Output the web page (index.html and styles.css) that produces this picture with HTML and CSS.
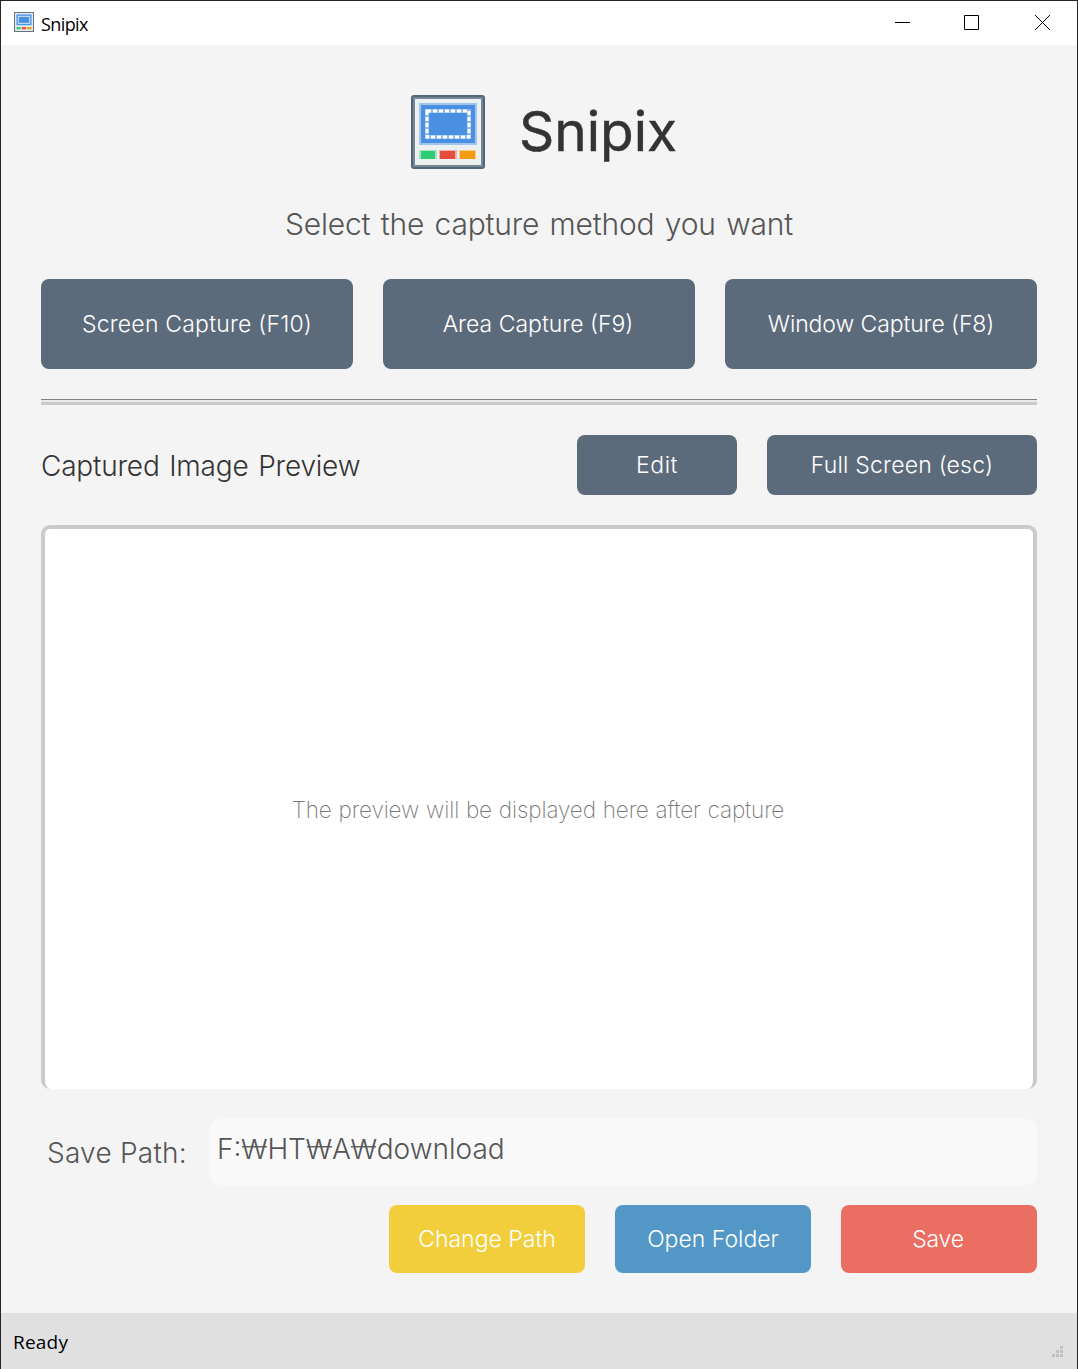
FILE: index.html
```html
<!DOCTYPE html>
<html lang="en">
<head>
<meta charset="utf-8">
<title>Snipix</title>
<link rel="stylesheet" href="styles.css">
</head>
<body>
<svg class="defs" width="0" height="0" aria-hidden="true">
  <symbol id="logo" viewBox="0 0 74 74">
    <rect x="0" y="0" width="74" height="74" rx="3" fill="#52667a"/>
    <rect x="2" y="2" width="70" height="70" fill="#788893"/>
    <rect x="4" y="4" width="66" height="66" fill="#ecf0f1"/>
    <rect x="8" y="8" width="58" height="42" fill="#a3c5eb"/>
    <rect x="10" y="10" width="54" height="38" fill="#4a90e2"/>
    <rect x="16" y="16" width="42" height="26" fill="none" stroke="#8dbaed" stroke-width="4"/>
    <rect x="16" y="16" width="42" height="26" fill="none" stroke="#fff" stroke-width="3" stroke-dasharray="4 2"/>
    <rect x="8" y="55" width="18" height="9" fill="#a9e3c2"/>
    <rect x="10" y="56" width="14" height="8" fill="#2ecc71"/>
    <rect x="28" y="55" width="18" height="9" fill="#eeb2ae"/>
    <rect x="29" y="56" width="15" height="8" fill="#e74c3c"/>
    <rect x="48" y="55" width="17" height="9" fill="#f2cf91"/>
    <rect x="49" y="56" width="15" height="8" fill="#f39c12"/>
  </symbol>
</svg>
<div class="window">
  <header class="titlebar">
    <svg class="app-icon" width="20" height="20"><use href="#logo"/></svg>
    <span class="window-title">Snipix</span>
    <svg class="controls" width="156" height="16" viewBox="0 0 156 16" fill="none" stroke="#000" stroke-width="1">
      <path d="M0 7.500H15M69.500.500H83.500V14.500H69.500Z"/>
      <path d="M140 0L155 15M155 0L140 15"/>
    </svg>
  </header>
  <main class="content">
    <div class="brand">
      <svg width="74" height="74"><use href="#logo"/></svg>
      <h1 class="brand-name">Snipix</h1>
    </div>
    <p class="subtitle"><span>Select the capture method you want</span></p>
    <div class="capture-row">
      <button class="btn"><span class="t-screen">Screen Capture (F10)</span></button>
      <button class="btn"><span class="t-area">Area Capture (F9)</span></button>
      <button class="btn"><span class="t-window">Window Capture (F8)</span></button>
    </div>
    <div class="divider"></div>
    <div class="preview-head">
      <h2 class="section-title">Captured Image Preview</h2>
      <button class="btn edit"><span class="t-edit">Edit</span></button>
      <button class="btn full"><span class="t-full">Full Screen (esc)</span></button>
    </div>
    <div class="preview"><span class="placeholder">The preview will be displayed here after capture</span></div>
    <div class="path-row">
      <label class="path-label">Save Path:</label>
      <div class="path-field"><span>F:<i class="won">W</i>HT<i class="won">W</i>A<i class="won">W</i>download</span></div>
    </div>
    <div class="actions">
      <button class="btn change"><span class="t-change">Change Path</span></button>
      <button class="btn open"><span class="t-open">Open Folder</span></button>
      <button class="btn save"><span class="t-save">Save</span></button>
    </div>
  </main>
  <footer class="status">
    <span class="status-text">Ready</span>
    <svg width="11" height="11" fill="#bfbfbf"><path d="M8 0h3v3h-3zM4 4h3v3h-3zM8 4h3v3h-3zM0 8h3v3h-3zM4 8h3v3h-3zM8 8h3v3h-3z"/></svg>
  </footer>
</div>
</body>
</html>
```
FILE: styles.css
```css
* { box-sizing: border-box; }
body { margin: 0; font-family: Inter, "Liberation Sans", sans-serif; font-weight: 300; }
.defs { display: block; height: 0; }
h1, h2, p { margin: 0; font-weight: 300; }
span, h1, h2, label { white-space: nowrap; }
.window {
  width: 1078px; height: 1369px; display: flex; flex-direction: column;
  border: 1px solid #252526; border-bottom: 0; background: #f4f4f4; overflow: hidden;
}
.titlebar { height: 44px; flex: none; display: flex; align-items: flex-start; background: #fff; padding: 11px 26px 0 13px; }
.window-title { margin: 0 auto 0 7px; font: 400 18px/24px "Open Sans", sans-serif; letter-spacing: -0.6px; color: #000; }
.controls { margin-top: 3px; }
.content { flex: 1; display: flex; flex-direction: column; padding: 50px 40px 0; }
.brand { display: flex; height: 74px; gap: 34px; padding-left: 370px; }
.brand-name { font-size: 55px; line-height: 73px; font-weight: 400; color: #333; -webkit-text-stroke: .5px #333; }
.subtitle { margin-top: 35px; height: 40px; line-height: 41px; text-align: center; font-size: 30px; color: #555; letter-spacing: -.2px; word-spacing: 2.2px; }
.capture-row { display: grid; grid-template-columns: repeat(3, 312px); gap: 30px; margin-top: 35px; height: 90px; }
.btn { border: 0; border-radius: 8px; padding: 0; background: #5c6b7b; color: #fff; font: 300 23px/30px Inter, sans-serif; letter-spacing: 0; }
.t-screen { letter-spacing: .2px; }
.t-area { letter-spacing: 0; margin-right: 2px; }
.t-window { letter-spacing: -.1px; }
.t-edit { letter-spacing: .6px; }
.t-full { letter-spacing: .2px; }
.t-save { letter-spacing: -.2px; margin-right: 2px; }
.divider { height: 6px; margin-top: 30px; border-top: 1px solid #828282; border-bottom: 3px solid #cacaca; background: #ebebeb; }
.preview-head { display: flex; align-items: center; height: 60px; margin-top: 30px; }
.section-title { margin-right: auto; padding-top: 1px; font-size: 28px; color: #333; letter-spacing: -.2px; word-spacing: 2px; }
.edit { width: 160px; height: 60px; margin-right: 30px; }
.full { width: 270px; height: 60px; }
.preview {
  height: 564px; margin-top: 30px; border: 4px solid #cacaca; border-bottom: 0; border-radius: 9px;
  background: #fff; display: flex; align-items: center; justify-content: center;
}
.placeholder { font-size: 22.5px; font-weight: 200; color: #777; letter-spacing: -.1px; word-spacing: .6px; margin-right: 2px; }
.path-row { display: flex; height: 66px; margin-top: 30px; align-items: center; font-size: 28px; color: #555; }
.path-label { width: 169px; padding: 1px 0 0 6px; letter-spacing: .25px; }
.path-field { flex: 1; height: 66px; border-radius: 10px; background: #f9f9f9; padding-left: 7px; line-height: 61px; }
/* W with a single bar, the Korean form of the path separator */
.won {
  display: inline-block; width: 25px; margin: 0 .3px 0 .7px; font-style: normal; line-height: 30px; text-indent: -1px;
  transform-origin: 0 50%;
  font-size: 27.5px; letter-spacing: -3px;
  background: linear-gradient(#666, #666) 0 12px / 25px 1.5px no-repeat;
}
.actions { display: flex; justify-content: flex-end; gap: 30px; margin-top: 20px; height: 68px; }
.actions .btn { width: 196px; }
.actions .change { background: #f2ce3c; }
.actions .open { background: #5397c7; }
.actions .save { background: #ea6f62; }
.status { flex: none; height: 56px; background: #e0e0e0; display: flex; align-items: center; justify-content: space-between; padding: 2px 14px 0 12px; }
.status-text { font: 400 19px/26px "Open Sans", sans-serif; color: #000; letter-spacing: .2px; }
.status svg { margin-top: 18px; }
```
